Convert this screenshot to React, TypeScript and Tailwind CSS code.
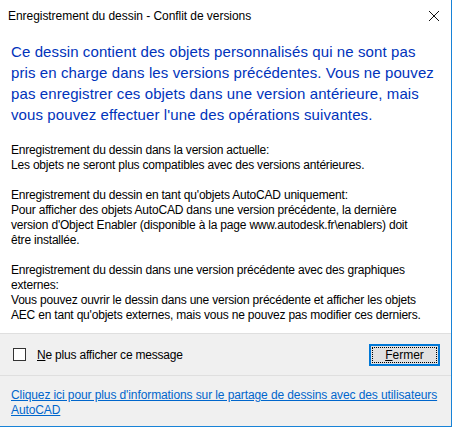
import React from "react";

const font = { fontFamily: '"Segoe UI", "Liberation Sans", Arial, sans-serif' };

export default function App() {
  return (
    <div
      className="w-[452px] h-[427px] bg-white border-r border-b border-[#1883d7] flex flex-col overflow-hidden text-black"
      style={font}
    >
      {/* Title bar */}
      <div className="h-[31px] flex items-center justify-between pl-[8px] pr-[8px] shrink-0">
        <span className="text-[12px] leading-[16px] whitespace-nowrap tracking-[-0.05px]">
          Enregistrement du dessin - Conflit de versions
        </span>
        <svg width="12" height="12" viewBox="0 0 12 12" className="mr-[3px]">
          <path d="M1 1 L11 11 M11 1 L1 11" stroke="#111" strokeWidth="1" />
        </svg>
      </div>

      {/* Content */}
      <div className="flex-1 flex flex-col px-[11px] pt-[10px]">
        <div className="text-[15px] leading-[21px] tracking-[0.1px] text-[#0033bb] whitespace-nowrap">
          <div>Ce dessin contient des objets personnalisés qui ne sont pas</div>
          <div>pris en charge dans les versions précédentes. Vous ne pouvez</div>
          <div>pas enregistrer ces objets dans une version antérieure, mais</div>
          <div>vous pouvez effectuer l'une des opérations suivantes.</div>
        </div>
        <div className="mt-[18px] text-[12px] leading-[15px] tracking-[-0.2px] whitespace-nowrap">
          <div>Enregistrement du dessin dans la version actuelle:</div>
          <div>Les objets ne seront plus compatibles avec des versions antérieures.</div>
          <div className="h-[15px]" />
          <div>Enregistrement du dessin en tant qu'objets AutoCAD uniquement:</div>
          <div>Pour afficher des objets AutoCAD dans une version précédente, la dernière</div>
          <div>version d'Object Enabler (disponible à la page www.autodesk.fr\enablers) doit</div>
          <div>être installée.</div>
          <div className="h-[15px]" />
          <div>Enregistrement du dessin dans une version précédente avec des graphiques</div>
          <div>externes:</div>
          <div>Vous pouvez ouvrir le dessin dans une version précédente et afficher les objets</div>
          <div>AEC en tant qu'objets externes, mais vous ne pouvez pas modifier ces derniers.</div>
        </div>
      </div>

      {/* Footer */}
      <div className="bg-[#f0f0f0] border-t border-[#dfdfdf] shrink-0">
        <div className="h-[41px] flex items-center justify-between pl-[13px] pr-[11px]">
          <label className="flex items-center gap-[11px] text-[12px] tracking-[-0.2px]">
            <span className="w-[13px] h-[13px] border border-[#333] bg-white block" />
            <span>
              <span className="underline">N</span>e plus afficher ce message
            </span>
          </label>
          <button className="w-[71px] h-[22px] border-2 border-[#0078d7] bg-[#e1e1e1] p-[1px] text-[12px]">
            <span className="w-full h-full flex items-center justify-center border border-dotted border-black">
              <span className="underline">F</span>ermer
            </span>
          </button>
        </div>
        <div className="border-t border-[#dfdfdf] pl-[11px] pt-[12px] pb-[8px] text-[12px] leading-[15px] tracking-[-0.1px] text-[#0066cc] underline whitespace-nowrap">
          <div>Cliquez ici pour plus d'informations sur le partage de dessins avec des utilisateurs</div>
          <div>AutoCAD</div>
        </div>
      </div>
    </div>
  );
}
